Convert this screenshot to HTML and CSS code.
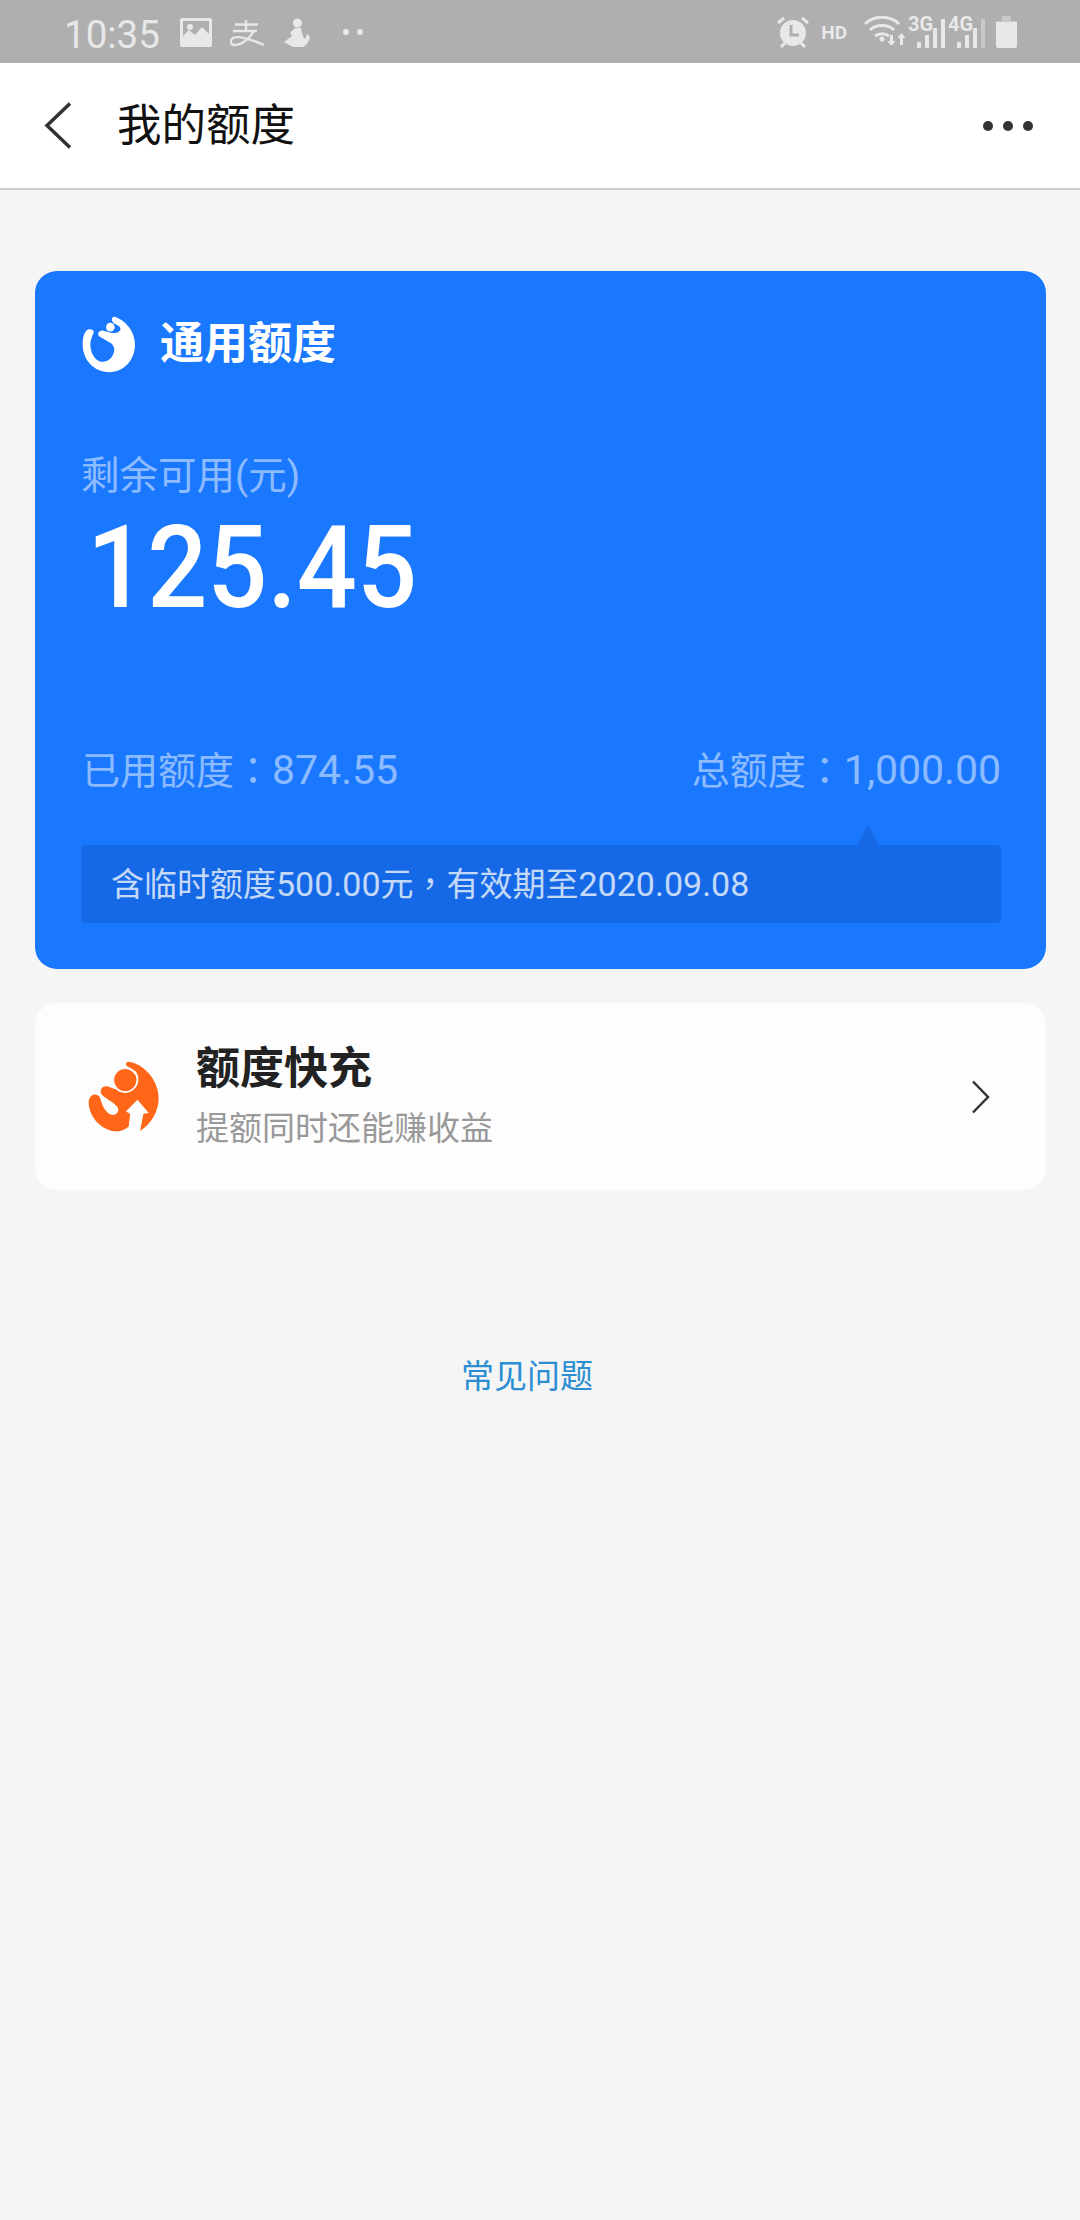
FILE: index.html
```html
<!DOCTYPE html>
<html lang="zh-CN">
<head>
  <meta charset="UTF-8">
  <title>我的额度</title>
  <link rel="stylesheet" href="styles.css">
</head>
<body>
  <div class="status-bar">
    <span class="time">10:35</span>
    <svg class="st-image" width="32" height="29" viewBox="0 0 32 29">
      <path fill="#e8e8e8" fill-rule="evenodd" d="M2 0h28a2 2 0 0 1 2 2v25a2 2 0 0 1-2 2H2a2 2 0 0 1-2-2V2a2 2 0 0 1 2-2zM3 3v15l6-6 6 5 7-8 7 7V3z"/>
      <circle cx="10" cy="9" r="3" fill="#e8e8e8"/>
    </svg>
    <svg class="st-alipay" width="35" height="27" viewBox="0 0 35 27">
      <path fill="none" stroke="#e8e8e8" stroke-width="2.400" d="M5 4.500h23M16 0v11M3 11h24M24 11C20 18 12 25 5 25 0 25 0 21 2 19 5 15 15 17 34 25"/>
    </svg>
    <svg class="st-figure" width="27" height="30" viewBox="0 0 27 30">
      <circle cx="14.500" cy="5" r="4.500" fill="#e8e8e8"/>
      <path fill="#e8e8e8" d="M12 10L7 15l2 3-8 6 9 5h10c4-2 6-6 7-10l-3-3-2 5c-2-1-3-6-4-11z"/>
    </svg>
    <span class="st-dots"><i></i><i></i></span>
    <span class="st-spacer"></span>
    <svg class="st-alarm" width="32" height="32" viewBox="0 0 32 32">
      <circle cx="16" cy="17" r="13" fill="#e8e8e8"/>
      <path fill="none" stroke="#e8e8e8" stroke-width="3" d="M1 7l6-5M31 7l-6-5M4 31l4-4M28 31l-4-4"/>
      <path fill="none" stroke="#afafaf" stroke-width="3" d="M14 9v10h8"/>
    </svg>
    <span class="st-hd">HD</span>
    <svg class="st-wifi" width="42" height="30" viewBox="0 0 42 30">
      <path fill="none" stroke="#e8e8e8" stroke-width="3" d="M1 9C10 0 26 0 35 9M6 15c6-6 18-6 24 0M11 21c4-3 10-3 14 0"/>
      <circle cx="18" cy="24" r="2.500" fill="#e8e8e8"/>
      <path fill="#e8e8e8" d="M26 20h3v6h2.500l-4 5-4-5H26zM36 30h3v-7h2.500l-4-5-4 5H36z"/>
    </svg>
    <span class="st-signal st-3g">
      <span class="st-net">3G</span>
      <svg width="29" height="30" viewBox="0 0 29 30">
        <path fill="#e8e8e8" d="M0 24h4v6H0zM8 17h4v13H8zM16 10h4v20h-4zM24 1h4v29h-4z"/>
      </svg>
    </span>
    <span class="st-signal st-4g">
      <span class="st-net">4G</span>
      <svg width="29" height="30" viewBox="0 0 29 30">
        <path fill="#e8e8e8" d="M0 24h4v6H0zM8 17h4v13H8zM16 10h4v20h-4z"/>
        <path fill="#c8c8c8" d="M24 1h4v29h-4z"/>
      </svg>
    </span>
    <svg class="st-battery" width="21" height="32" viewBox="0 0 21 32">
      <path fill="#c8c8c8" d="M6 0h9v5h6v6H0V5h6z"/>
      <path fill="#e8e8e8" d="M0 6h21v24a2 2 0 0 1-2 2H2a2 2 0 0 1-2-2z"/>
    </svg>
  </div>

  <header class="top-bar">
    <svg class="back" width="28" height="47" viewBox="0 0 28 47">
      <path fill="none" stroke="#333" stroke-width="3.500" d="M26 1.500L3 23.500l23 22"/>
    </svg>
    <h1 class="page-title">我的额度</h1>
    <span class="more"><i></i><i></i><i></i></span>
  </header>

  <main class="content">
    <section class="quota-card">
      <div class="quota-head">
        <svg class="quota-logo" width="55" height="57" viewBox="60 50 165 170">
          <path fill="#fff" d="M160 52C195 62 222 98 222 135C222 182 188 218 145 218C100 218 65 182 65 135C65 118 68 102 75 95C82 85 100 88 98 100C88 122 85 135 92 158C100 178 112 187 125 187C145 187 160 170 160 148C158 135 150 130 140 125L114 110C108 100 115 93 125 93C140 97 165 108 178 92C180 80 170 78 160 72C150 66 150 52 160 52z"/>
          <circle cx="148" cy="83" r="13" fill="#fff"/>
        </svg>
        <h2 class="quota-title">通用额度</h2>
      </div>
      <div class="remain-label">剩余可用(元)</div>
      <div class="remain-value">125.45</div>
      <div class="quota-stats">
        <span>已用额度<span class="punct" lang="zh-TW">：</span><span class="num">874.55</span></span>
        <span>总额度<span class="punct" lang="zh-TW">：</span><span class="num">1,000.00</span></span>
      </div>
      <div class="quota-note">含临时额度<span class="num">500.00</span>元<span class="punct" lang="zh-TW">，</span>有效期至<span class="num">2020.09.08</span></div>
    </section>

    <section class="boost-card">
      <svg class="boost-logo" width="73" height="73" viewBox="80 90 220 220">
        <path fill="#ff6618" d="M205 95C250 100 296 150 296 205C296 245 272 285 240 303L250 252L266 250L232 210L197 245L210 252L206 290C195 302 180 306 165 305C120 300 85 260 85 215C88 190 112 188 120 205C125 225 135 250 155 255C170 258 178 245 172 232C160 215 130 205 122 190C118 172 135 165 150 172L165 178L230 130C222 118 208 112 200 108C195 102 198 96 205 95z"/>
        <path fill="none" stroke="#fdfdfd" stroke-width="6" d="M163 168A37 37 0 1 0 222 124"/>
        <circle cx="195" cy="150" r="33" fill="#ff6618"/>
      </svg>
      <div class="boost-text">
        <h3 class="boost-title">额度快充</h3>
        <p class="boost-sub">提额同时还能赚收益</p>
      </div>
      <svg class="chevron" width="19" height="34" viewBox="0 0 19 34">
        <path fill="none" stroke="#333" stroke-width="2.500" d="M2 1.500L17 17 2 32.500"/>
      </svg>
    </section>

    <a class="faq-link">常见问题</a>
  </main>
</body>
</html>
```

FILE: styles.css
```css
* {
  box-sizing: border-box;
}

html, body {
  margin: 0;
  padding: 0;
}

body {
  width: 1080px;
  height: 2220px;
  overflow: hidden;
  background-color: #f5f5f5;
  font-family: Roboto, "Noto Sans CJK SC", sans-serif;
}

h1, h2, h3, p {
  margin: 0;
}

/* status bar */
.status-bar {
  display: flex;
  align-items: flex-start;
  height: 63px;
  padding: 0 0 0 64px;
  background-color: #afafaf;
  color: #e8e8e8;
}

.time {
  width: 96px;
  margin-top: 12px;
  font-size: 38.500px;
  line-height: 46px;
}

.st-image {
  margin: 18px 0 0 20px;
}

.st-alipay {
  margin: 20px 0 0 18px;
}

.st-figure {
  margin: 18px 0 0 18px;
}

.st-dots {
  display: flex;
  gap: 8px;
  margin: 29px 0 0 33px;
}

.st-dots i {
  width: 6px;
  height: 6px;
  border-radius: 50%;
  background-color: #e8e8e8;
}

.st-spacer {
  flex: 1;
}

.st-alarm {
  margin-top: 16px;
}

.st-hd {
  margin: 21px 0 0 12px;
  font-size: 19px;
  line-height: 24px;
  font-weight: 700;
}

.st-wifi {
  margin: 15px 0 0 17px;
}

.st-signal {
  position: relative;
  display: block;
  width: 40px;
  height: 48px;
}

.st-3g {
  margin-left: 2px;
}

.st-net {
  position: absolute;
  left: 0;
  top: 14px;
  font-size: 20px;
  line-height: 20px;
  font-weight: 700;
}

.st-signal svg {
  position: absolute;
  left: 9px;
  top: 18px;
}

.st-battery {
  margin: 16px 63px 0 8px;
}

/* title bar */
.top-bar {
  display: flex;
  align-items: center;
  height: 127px;
  padding: 0 47px 0 44px;
  background-color: #fff;
  border-bottom: 2px solid #cdcdcd;
}

.page-title {
  flex: 1;
  margin-left: 45px;
  font-size: 44.500px;
  line-height: 60px;
  font-weight: 400;
  color: #111;
}

.more {
  display: flex;
  gap: 10px;
}

.more i {
  width: 10px;
  height: 10px;
  border-radius: 50%;
  background-color: #333;
}

/* content */
.content {
  padding: 81px 34px 0 35px;
}

.quota-card {
  position: relative;
  height: 698px;
  padding: 45px 45px 46px 46px;
  border-radius: 22px;
  background-color: #1a78ff;
}

.quota-head {
  display: flex;
  align-items: center;
}

.quota-title {
  margin-left: 24px;
  font-size: 44px;
  line-height: 57px;
  font-weight: 700;
  color: #fff;
}

.remain-label {
  margin-top: 78px;
  font-size: 38.500px;
  line-height: 50px;
  color: rgba(255, 255, 255, 0.5);
}

.remain-value {
  margin: 7px 0 0 6px;
  font-size: 115px;
  line-height: 120px;
  font-weight: 500;
  color: #fff;
  transform: scaleX(0.92);
  transform-origin: left center;
}

.quota-stats {
  display: flex;
  justify-content: space-between;
  margin-top: 115px;
  padding-left: 1px;
  font-size: 38px;
  line-height: 50px;
  color: rgba(255, 255, 255, 0.5);
}

.quota-stats .num {
  font-size: 41px;
  line-height: 1;
}

.punct {
  font-family: "Noto Sans CJK TC", sans-serif;
}

.quota-note {
  position: relative;
  height: 78px;
  margin-top: 49px;
  padding-left: 30px;
  border-radius: 4px;
  background-color: #1669e6;
  font-size: 33px;
  line-height: 74px;
  color: rgba(255, 255, 255, 0.75);
}

.quota-note .num {
  font-size: 34px;
  line-height: 1;
}

.quota-note::before {
  content: "";
  position: absolute;
  right: 122px;
  top: -20px;
  border-left: 11px solid transparent;
  border-right: 11px solid transparent;
  border-bottom: 20px solid #1669e6;
}

.boost-card {
  display: flex;
  align-items: center;
  height: 187px;
  margin-top: 34px;
  padding: 0 56px 0 52px;
  border-radius: 22px;
  background-color: #fdfdfd;
}

.boost-text {
  flex: 1;
  margin-left: 36px;
}

.boost-title {
  font-size: 44px;
  line-height: 54px;
  font-weight: 700;
  color: #222;
}

.boost-sub {
  margin-top: 10px;
  font-size: 33px;
  line-height: 46px;
  color: #999;
}

.faq-link {
  display: block;
  margin-top: 164px;
  padding-right: 27px;
  text-align: center;
  font-size: 33px;
  line-height: 46px;
  color: #2b8ed2;
}
```
